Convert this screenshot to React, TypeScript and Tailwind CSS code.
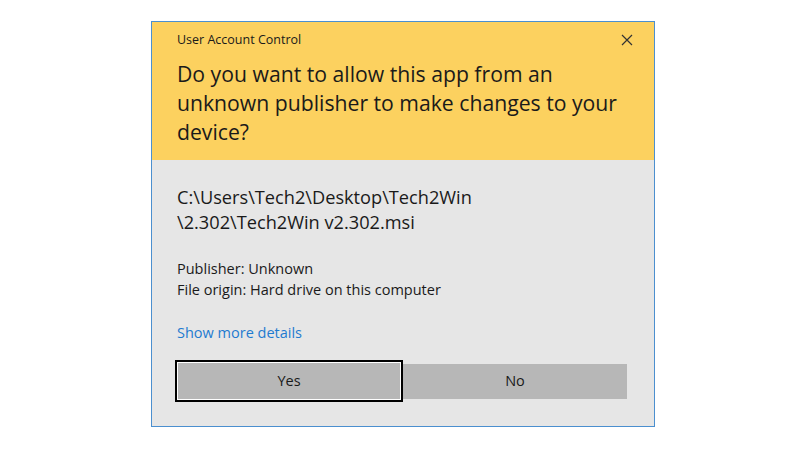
import React from 'react';

const font = { fontFamily: '"Open Sans", "Noto Sans", sans-serif' };

export default function App() {
  return (
    <div className="w-[800px] h-[450px] bg-white relative" style={font}>
      <div className="absolute left-[151px] top-[21px] w-[504px] h-[406px] border border-[#4b8fcf] bg-[#e6e6e6] flex flex-col">
        {/* Yellow header */}
        <div className="bg-[#fcd15f] pl-[25px] pr-[20px] pt-[9px] pb-[14px] text-[#1a1a1a]">
          <div className="flex items-center justify-between h-[18px]">
            <span className="text-[12.5px] leading-[18px]">User Account Control</span>
            <svg width="12" height="12" viewBox="0 0 12 12" className="mr-[1px]">
              <path d="M1 1 L11 11 M11 1 L1 11" stroke="#333" strokeWidth="1.2" fill="none" />
            </svg>
          </div>
          <p className="mt-[10px] text-[21.2px] leading-[29px] whitespace-nowrap">
            Do you want to allow this app from an
            <br />
            unknown publisher to make changes to your
            <br />
            device?
          </p>
        </div>

        {/* Body */}
        <div className="pl-[25px] pr-[26px] pt-[25px] flex-1 flex flex-col text-[#1a1a1a]">
          <p className="text-[18.2px] leading-[25px]">
            C:\Users\Tech2\Desktop\Tech2Win
            <br />
            \2.302\Tech2Win v2.302.msi
          </p>
          <div className="mt-[23px] text-[14.5px] leading-[21px]">
            <p>Publisher: Unknown</p>
            <p>File origin: Hard drive on this computer</p>
          </div>
          <p className="mt-[22px] text-[14.5px] leading-[21px] text-[#1f7bd0]">Show more details</p>
          <div className="mt-[17px] ml-[-2px] flex items-center h-[42px]">
            <button className="w-[228px] h-[42px] border-2 border-black bg-[#b7b7b7] shadow-[inset_0_0_0_1px_#ffffff] text-[14.5px] text-[#1a1a1a]">
              Yes
            </button>
            <button className="w-[224px] h-[35px] bg-[#b7b7b7] text-[14.5px] text-[#1a1a1a]">No</button>
          </div>
        </div>
      </div>
    </div>
  );
}
